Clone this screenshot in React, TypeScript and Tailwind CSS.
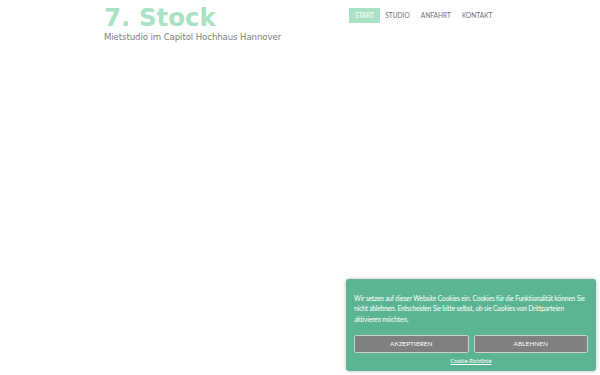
const NAV = ['Start', 'Studio', 'Anfahrt', 'Kontakt']

export default function App() {
  return (
    <div className="relative h-[375px] w-[600px] overflow-hidden bg-white">
      <header className="flex items-start justify-between pl-[104px] pr-[102px]">
        <div className="pt-[2px]">
          <h1 className="text-[24.5px] font-bold leading-[31px] text-[#a8e2c3] [font-family:'DejaVu_Sans',sans-serif]">
            7. Stock
          </h1>
          <p className="-mt-[2px] text-[8.6px] leading-[12px] tracking-[-0.1px] text-[#808080] [font-family:'DejaVu_Sans',sans-serif]">
            Mietstudio im Capitol Hochhaus Hannover
          </p>
        </div>
        <nav className="mt-[8px] flex items-center [font-family:Lato,sans-serif]">
          {NAV.map((item, i) => (
            <a
              key={item}
              className={`px-[5.5px] py-[4px] text-[6.6px] uppercase leading-[7px] ${
                i === 0 ? 'bg-[#a8e2c3] text-white' : 'text-[#707070]'
              }`}
            >
              {item}
            </a>
          ))}
        </nav>
      </header>

      <div className="absolute bottom-[4px] right-[4px] w-[250px] rounded-[3px] bg-[#5cb592] pb-[6px] pl-[8px] pr-[8px] pt-[14px] shadow-[0_0_4px_rgba(0,0,0,0.25)] [font-family:Lato,sans-serif]">
        <p className="text-[6.6px] leading-[10.3px] tracking-[-0.15px] text-white">
          Wir setzen auf dieser Website Cookies ein. Cookies für die Funktionalität können Sie nicht ablehnen.
          Entscheiden Sie bitte selbst, ob sie Cookies von Drittparteien aktivieren möchten.
        </p>
        <div className="mt-[11px] grid grid-cols-2 gap-[5px]">
          <button className="h-[18px] rounded-[2px] border border-[#cfcfcf] bg-[#808080] text-[6.5px] uppercase text-white">
            Akzeptieren
          </button>
          <button className="h-[18px] rounded-[2px] border border-[#cfcfcf] bg-[#808080] text-[6.5px] uppercase text-white">
            Ablehnen
          </button>
        </div>
        <p className="mt-[4px] text-center text-[5.5px] leading-[8px] text-white underline">
          Cookie-Richtlinie
        </p>
      </div>
    </div>
  )
}
